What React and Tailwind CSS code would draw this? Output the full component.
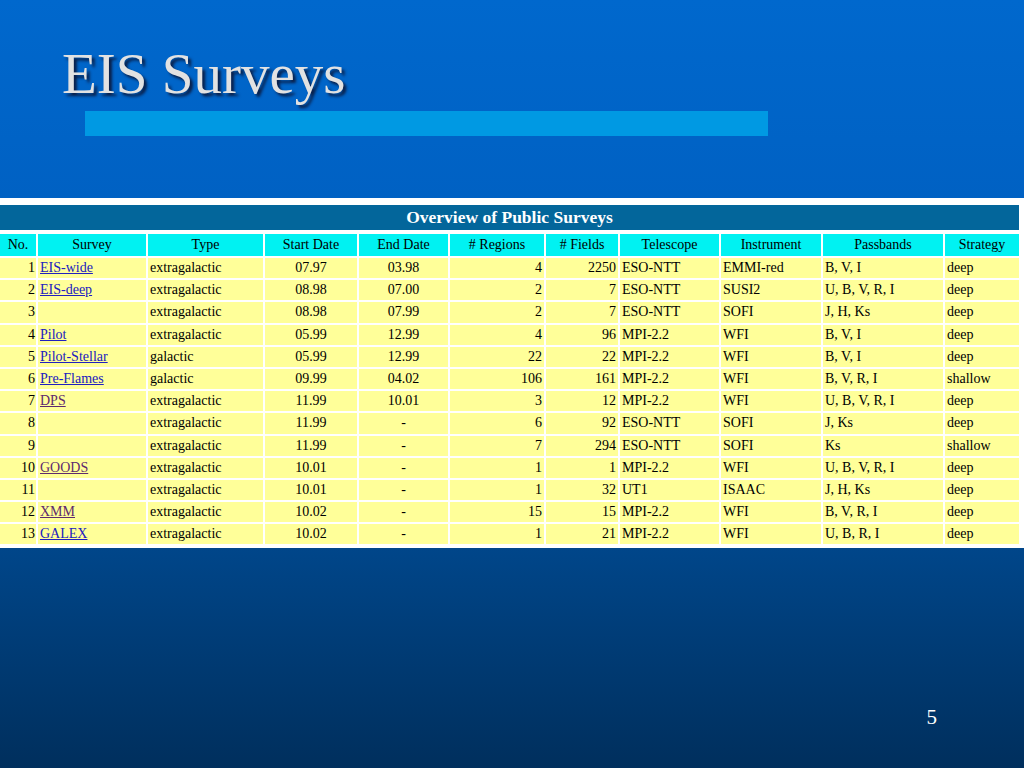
import React from "react"

const serif = "font-['Liberation_Serif','Times_New_Roman',serif]"

const rows = [
    { no: 1, name: "EIS-wide", visited: false, type: "extragalactic", start: "07.97", end: "03.98", regions: 4, fields: 2250, tel: "ESO-NTT", inst: "EMMI-red", bands: "B, V, I", strat: "deep" },
    { no: 2, name: "EIS-deep", visited: false, type: "extragalactic", start: "08.98", end: "07.00", regions: 2, fields: 7, tel: "ESO-NTT", inst: "SUSI2", bands: "U, B, V, R, I", strat: "deep" },
    { no: 3, name: "", type: "extragalactic", start: "08.98", end: "07.99", regions: 2, fields: 7, tel: "ESO-NTT", inst: "SOFI", bands: "J, H, Ks", strat: "deep" },
    { no: 4, name: "Pilot", visited: false, type: "extragalactic", start: "05.99", end: "12.99", regions: 4, fields: 96, tel: "MPI-2.2", inst: "WFI", bands: "B, V, I", strat: "deep" },
    { no: 5, name: "Pilot-Stellar", visited: false, type: "galactic", start: "05.99", end: "12.99", regions: 22, fields: 22, tel: "MPI-2.2", inst: "WFI", bands: "B, V, I", strat: "deep" },
    { no: 6, name: "Pre-Flames", visited: false, type: "galactic", start: "09.99", end: "04.02", regions: 106, fields: 161, tel: "MPI-2.2", inst: "WFI", bands: "B, V, R, I", strat: "shallow" },
    { no: 7, name: "DPS", visited: true, type: "extragalactic", start: "11.99", end: "10.01", regions: 3, fields: 12, tel: "MPI-2.2", inst: "WFI", bands: "U, B, V, R, I", strat: "deep" },
    { no: 8, name: "", type: "extragalactic", start: "11.99", end: "-", regions: 6, fields: 92, tel: "ESO-NTT", inst: "SOFI", bands: "J, Ks", strat: "deep" },
    { no: 9, name: "", type: "extragalactic", start: "11.99", end: "-", regions: 7, fields: 294, tel: "ESO-NTT", inst: "SOFI", bands: "Ks", strat: "shallow" },
    { no: 10, name: "GOODS", visited: true, type: "extragalactic", start: "10.01", end: "-", regions: 1, fields: 1, tel: "MPI-2.2", inst: "WFI", bands: "U, B, V, R, I", strat: "deep" },
    { no: 11, name: "", type: "extragalactic", start: "10.01", end: "-", regions: 1, fields: 32, tel: "UT1", inst: "ISAAC", bands: "J, H, Ks", strat: "deep" },
    { no: 12, name: "XMM", visited: true, type: "extragalactic", start: "10.02", end: "-", regions: 15, fields: 15, tel: "MPI-2.2", inst: "WFI", bands: "B, V, R, I", strat: "deep" },
    { no: 13, name: "GALEX", visited: false, type: "extragalactic", start: "10.02", end: "-", regions: 1, fields: 21, tel: "MPI-2.2", inst: "WFI", bands: "U, B, R, I", strat: "deep" },
]

const headers = ["No.", "Survey", "Type", "Start Date", "End Date", "# Regions", "# Fields", "Telescope", "Instrument", "Passbands", "Strategy"]
const widths = ["w-[36px]", "w-[108px]", "w-[115px]", "w-[92px]", "w-[89px]", "w-[94px]", "w-[72px]", "w-[99px]", "w-[100px]", "w-[120px]", "w-[74px]"]

const td = "bg-[#ffff99] h-[20.2px] px-[2px] py-0 leading-[16px] whitespace-nowrap"

const App = () => {
    return (
        <div className={`w-[1024px] h-[768px] flex flex-col overflow-hidden ${serif}`}>
            {/* slide title */}
            <div className="h-[198px] bg-gradient-to-b from-[#0068cd] to-[#0061c3] pt-[46px]">
                <h1 className="ml-[62px] text-[57px] leading-[56px] text-[#e2e2e2] [text-shadow:3px_3px_3px_#0a1e46]">
                    EIS Surveys
                </h1>
                <div className="ml-[85px] mt-[9px] w-[683px] h-[25px] bg-[#0099e3]" />
            </div>

            {/* captured web page */}
            <div className="h-[350px] bg-white overflow-hidden text-[14px] text-black">
                <div className="mt-[7px] w-[1019px] h-[25px] bg-[#03669b] flex items-center justify-center">
                    <span className="text-white font-bold text-[17.5px] leading-none">Overview of Public Surveys</span>
                </div>
                <table className="-ml-[2px] mt-[2px] w-[1023px] table-fixed border-separate border-spacing-[2px]">
                    <colgroup>
                        {widths.map((w, i) => (
                            <col key={i} className={w} />
                        ))}
                    </colgroup>
                    <thead>
                        <tr>
                            {headers.map((h) => (
                                <th key={h} className="bg-[#00f2f2] h-[22px] p-0 font-normal text-center leading-[16px] whitespace-nowrap">
                                    {h}
                                </th>
                            ))}
                        </tr>
                    </thead>
                    <tbody>
                        {rows.map((r) => (
                            <tr key={r.no}>
                                <td className={`${td} text-right !pr-[1px]`}>{r.no}</td>
                                <td className={`${td} text-left`}>
                                    {r.name && (
                                        <a href="#" className={`underline ${r.visited ? "text-[#5e2a6e]" : "text-[#2020c0]"}`}>
                                            {r.name}
                                        </a>
                                    )}
                                </td>
                                <td className={`${td} text-left`}>{r.type}</td>
                                <td className={`${td} text-center`}>{r.start}</td>
                                <td className={`${td} text-center`}>{r.end}</td>
                                <td className={`${td} text-right`}>{r.regions}</td>
                                <td className={`${td} text-right`}>{r.fields}</td>
                                <td className={`${td} text-left`}>{r.tel}</td>
                                <td className={`${td} text-left`}>{r.inst}</td>
                                <td className={`${td} text-left`}>{r.bands}</td>
                                <td className={`${td} text-left`}>{r.strat}</td>
                            </tr>
                        ))}
                    </tbody>
                </table>
            </div>

            {/* slide footer */}
            <div className="flex-1 bg-gradient-to-b from-[#00468a] to-[#002f5d] flex justify-end pr-[87px] pt-[159px]">
                <span className="text-white text-[21px] leading-[21px] h-fit">5</span>
            </div>
        </div>
    )
}

export default App
